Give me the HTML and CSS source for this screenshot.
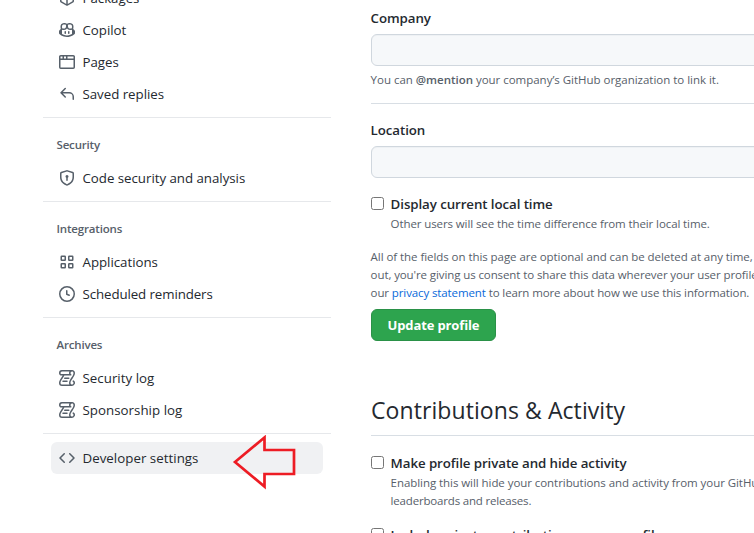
FILE: index.html
```html
<!DOCTYPE html>
<html lang="en">
<head>
<meta charset="utf-8">
<title>Public profile</title>
<link rel="stylesheet" href="styles.css">
</head>
<body>
<svg class="defs" aria-hidden="true">
<symbol id="package" viewBox="0 0 16 16"><path d="m8.878.392 5.25 3.045c.54.314.872.89.872 1.514v6.098a1.75 1.75 0 0 1-.872 1.514l-5.25 3.045a1.75 1.75 0 0 1-1.756 0l-5.25-3.045A1.75 1.75 0 0 1 1 11.049V4.951c0-.624.332-1.201.872-1.514L7.122.392a1.75 1.75 0 0 1 1.756 0ZM7.875 1.69l-4.63 2.685L8 7.133l4.755-2.758-4.63-2.685a.248.248 0 0 0-.25 0ZM2.5 5.677v5.372c0 .09.047.171.125.216l4.625 2.683V8.432Zm6.25 8.271 4.625-2.683a.25.25 0 0 0 .125-.216V5.677L8.75 8.432Z"/></symbol>
<symbol id="copilot" viewBox="0 0 16 16"><path d="M7.998 15.035c-4.562 0-7.873-2.914-7.998-3.749V9.338c.085-.628.677-1.686 1.588-2.065.013-.07.024-.143.036-.218.029-.183.06-.384.126-.612-.201-.508-.254-1.084-.254-1.656 0-.87.128-1.769.693-2.484.579-.733 1.494-1.124 2.724-1.261 1.206-.134 2.262.034 2.944.765.05.053.096.108.139.165.044-.057.094-.112.143-.165.682-.731 1.738-.899 2.944-.765 1.23.137 2.145.528 2.724 1.261.566.715.693 1.614.693 2.484 0 .572-.053 1.148-.254 1.656.066.228.098.429.126.612.012.076.024.148.037.218.924.385 1.522 1.471 1.591 2.095v1.872c0 .766-3.351 3.795-8.002 3.795Zm0-1.485c2.28 0 4.584-1.11 5.002-1.433V7.862l-.023-.116c-.49.21-1.075.291-1.727.291-1.146 0-2.059-.327-2.71-.991A3.222 3.222 0 0 1 8 6.303a3.24 3.24 0 0 1-.544.743c-.65.664-1.563.991-2.71.991-.652 0-1.236-.081-1.727-.291l-.023.116v4.255c.419.323 2.722 1.433 5.002 1.433ZM6.762 2.83c-.193-.206-.637-.413-1.682-.297-1.019.113-1.479.404-1.713.7-.247.312-.369.789-.369 1.554 0 .793.129 1.171.308 1.371.162.181.519.379 1.442.379.853 0 1.339-.235 1.638-.54.315-.322.527-.827.617-1.553.117-.935-.037-1.395-.241-1.614Zm4.155-.297c-1.044-.116-1.488.091-1.681.297-.204.219-.359.679-.242 1.614.091.726.303 1.231.618 1.553.299.305.784.54 1.638.54.922 0 1.28-.198 1.442-.379.179-.2.308-.578.308-1.371 0-.765-.123-1.242-.37-1.554-.233-.296-.693-.587-1.713-.7Z"/><path d="M6.25 9.037a.75.75 0 0 1 .75.75v1.501a.75.75 0 0 1-1.5 0V9.787a.75.75 0 0 1 .75-.75Zm4.25.75v1.501a.75.75 0 0 1-1.5 0V9.787a.75.75 0 0 1 1.5 0Z"/></symbol>
<symbol id="browser" viewBox="0 0 16 16"><path d="M0 2.75C0 1.784.784 1 1.75 1h12.5c.966 0 1.75.784 1.75 1.75v10.5A1.75 1.75 0 0 1 14.25 15H1.75A1.75 1.75 0 0 1 0 13.25ZM14.5 6h-13v7.25c0 .138.112.25.25.25h12.5a.25.25 0 0 0 .25-.25Zm-6-3.5v2h6V2.75a.25.25 0 0 0-.25-.25ZM5 2.5v2h2v-2Zm-3.25 0a.25.25 0 0 0-.25.25V4.5h2v-2Z"/></symbol>
<symbol id="reply" viewBox="0 0 16 16"><path d="M6.78 1.97a.75.75 0 0 1 0 1.06L3.81 6h6.44A4.75 4.75 0 0 1 15 10.75v2.5a.75.75 0 0 1-1.5 0v-2.5a3.25 3.25 0 0 0-3.25-3.25H3.81l2.97 2.97a.749.749 0 0 1-.326 1.275.749.749 0 0 1-.734-.215L1.47 7.28a.75.75 0 0 1 0-1.06l4.25-4.25a.75.75 0 0 1 1.06 0Z"/></symbol>
<symbol id="shield" viewBox="0 0 16 16"><path d="m8.533.133 5.25 1.68A1.75 1.75 0 0 1 15 3.48V7c0 1.566-.32 3.182-1.303 4.682-.983 1.498-2.585 2.813-5.032 3.855a1.697 1.697 0 0 1-1.33 0c-2.447-1.042-4.049-2.357-5.032-3.855C1.32 10.182 1 8.566 1 7V3.48a1.755 1.755 0 0 1 1.217-1.667l5.25-1.68a1.748 1.748 0 0 1 1.066 0Zm-.61 1.429.001.001-5.25 1.68a.251.251 0 0 0-.174.237V7c0 1.36.275 2.666 1.057 3.859.784 1.194 2.121 2.342 4.366 3.298a.196.196 0 0 0 .154 0c2.245-.957 3.582-2.103 4.366-3.297C13.225 9.666 13.5 8.358 13.5 7V3.48a.25.25 0 0 0-.174-.238l-5.25-1.68a.25.25 0 0 0-.153 0ZM9.5 6.5c0 .536-.286 1.032-.75 1.3v2.45a.75.75 0 0 1-1.5 0V7.8A1.5 1.5 0 1 1 9.5 6.5Z"/></symbol>
<symbol id="apps" viewBox="0 0 16 16"><g fill="none" stroke="currentColor" stroke-width="1.5"><rect x="2.25" y="2.25" width="4" height="4" rx=".5"/><rect x="9.75" y="2.25" width="4" height="4" rx=".5"/><rect x="2.25" y="9.75" width="4" height="4" rx=".5"/><rect x="9.75" y="9.75" width="4" height="4" rx=".5"/></g></symbol>
<symbol id="clock" viewBox="0 0 16 16"><path d="M8 0a8 8 0 1 1 0 16A8 8 0 0 1 8 0ZM1.5 8a6.5 6.5 0 1 0 13 0 6.5 6.5 0 0 0-13 0Zm7-3.25v2.992l2.028.812a.75.75 0 0 1-.557 1.392l-2.5-1A.751.751 0 0 1 7 8.25v-3.5a.75.75 0 0 1 1.5 0Z"/></symbol>
<symbol id="log" viewBox="0 0 16 16"><path d="M5 8.25a.75.75 0 0 1 .75-.75h4a.75.75 0 0 1 0 1.5h-4A.75.75 0 0 1 5 8.25ZM4 10.5A.75.75 0 0 0 4 12h4a.75.75 0 0 0 0-1.5H4Z"/><path d="M13-.005c1.654 0 3 1.328 3 3 0 .982-.338 1.933-.783 2.818-.443.879-1.028 1.758-1.582 2.588l-.011.017c-.568.853-1.104 1.659-1.501 2.446-.398.789-.623 1.494-.623 2.136a1.5 1.5 0 1 0 2.333-1.248.75.75 0 0 1 .834-1.246A3 3 0 0 1 13 16H3a3 3 0 0 1-3-3c0-1.582.891-3.135 1.777-4.506.209-.322.418-.637.623-.946.473-.709.923-1.386 1.287-2.048H2.51c-.576 0-1.381-.133-1.907-.783A2.68 2.68 0 0 1 0 2.995a3 3 0 0 1 3-3Zm0 1.5a1.5 1.5 0 0 0-1.5 1.5c0 .476.223.834.667 1.132A.75.75 0 0 1 11.75 5.5H5.368c-.467 1.003-1.141 2.015-1.773 2.963-.192.289-.381.571-.558.845C2.13 10.711 1.5 11.916 1.5 13A1.5 1.5 0 0 0 3 14.5h7.401A2.989 2.989 0 0 1 10 13c0-.979.338-1.928.784-2.812.441-.874 1.023-1.748 1.575-2.576l.017-.026c.568-.853 1.103-1.658 1.501-2.448.398-.79.623-1.497.623-2.143 0-.838-.669-1.5-1.5-1.5Zm-10 0a1.5 1.5 0 0 0-1.5 1.5c0 .321.1.569.27.778.097.12.325.227.74.227h7.674A2.737 2.737 0 0 1 10 2.995c0-.546.146-1.059.401-1.5Z"/></symbol>
<symbol id="code" viewBox="0 0 16 16"><path d="m11.28 3.22 4.25 4.25a.75.75 0 0 1 0 1.06l-4.25 4.25a.749.749 0 0 1-1.275-.326.749.749 0 0 1 .215-.734L13.94 8l-3.72-3.72a.749.749 0 0 1 .326-1.275.749.749 0 0 1 .734.215Zm-6.56 0a.751.751 0 0 1 1.042.018.751.751 0 0 1 .018 1.042L2.06 8l3.72 3.72a.749.749 0 0 1-.326 1.275.749.749 0 0 1-.734-.215L.47 8.53a.75.75 0 0 1 0-1.06Z"/></symbol>
</svg>
<div class="page">
<nav class="sidebar">
  <a class="item"><svg><use href="#package"/></svg><span>Packages</span></a>
  <a class="item"><svg><use href="#copilot"/></svg><span>Copilot</span></a>
  <a class="item"><svg><use href="#browser"/></svg><span>Pages</span></a>
  <a class="item"><svg><use href="#reply"/></svg><span>Saved replies</span></a>
  <hr>
  <h3>Security</h3>
  <a class="item"><svg><use href="#shield"/></svg><span>Code security and analysis</span></a>
  <hr>
  <h3>Integrations</h3>
  <a class="item"><svg><use href="#apps"/></svg><span>Applications</span></a>
  <a class="item"><svg><use href="#clock"/></svg><span class="t-reminders">Scheduled reminders</span></a>
  <hr>
  <h3>Archives</h3>
  <a class="item"><svg><use href="#log"/></svg><span class="t-log">Security log</span></a>
  <a class="item"><svg><use href="#log"/></svg><span class="t-log">Sponsorship log</span></a>
  <hr class="last">
  <a class="item active"><svg><use href="#code"/></svg><span class="t-log">Developer settings</span></a>
</nav>
<main class="main">
  <label class="label">Company</label>
  <div class="field"></div>
  <p class="note t-mention">You can <b>@mention</b> your company’s GitHub organization to link it.</p>
  <div class="rule"></div>
  <label class="label">Location</label>
  <div class="field"></div>
  <div class="check local">
    <i class="box"></i>
    <div><label class="label">Display current local time</label>
    <p class="note t-other">Other users will see the time difference from their local time.</p></div>
  </div>
  <p class="note terms"><span class="t-l1">All of the fields on this page are optional and can be deleted at any time,</span><br><span class="t-l2">out, you're giving us consent to share this data wherever your user profile</span><br><span class="t-l3">our <a>privacy statement</a> to learn more about how we use this information.</span></p>
  <button class="button">Update profile</button>
  <h2>Contributions &amp; Activity</h2>
  <div class="check private">
    <i class="box"></i>
    <div><label class="label">Make profile private and hide activity</label>
    <p class="note"><span class="t-enable">Enabling this will hide your contributions and activity from your GitHub</span><br><span class="t-leader">leaderboards and releases.</span></p></div>
  </div>
  <div class="check include">
    <i class="box"></i>
    <div><label class="label">Include private contributions on my profile</label></div>
  </div>
</main>
</div>
<svg class="arrow" width="66" height="56" viewBox="0 0 66 56"><path d="M3 27 32.500 2.500V15H62V39H32.500V51.500Z" fill="none" stroke="#ed1c24" stroke-width="2.700"/></svg>
</body>
</html>
```
FILE: styles.css
```css
* { box-sizing: border-box; }
html, body { height: 100%; overflow: hidden; }
body { margin: 0; background: #fff; color: #24292f; font: 13.3px/20px "Open Sans", "Noto Sans", sans-serif; }
.defs { display: none; }
.page { display: flex; height: 533px; overflow: hidden; }
.sidebar { flex: none; width: 288px; margin: -18px 40px 0 43px; }
.item { display: flex; align-items: center; gap: 7.500px; height: 32px; margin: 0 8px; padding: 0 8px; border-radius: 6px; white-space: nowrap; letter-spacing: -.03px; }
.item svg { flex: none; width: 16px; height: 16px; fill: #57606a; color: #57606a; }
.item.active { background: #f0f1f3; }
.t-reminders { letter-spacing: -.1px; }
.t-log { letter-spacing: .03px; }
.sidebar hr { height: 1px; margin: 7px 0 0; border: 0; background: #e6e8eb; }
.sidebar hr.last { margin-bottom: 8px; }
h3 { margin: 0; padding: 18px 13.500px 8px; height: 44px; font-size: 11.5px; line-height: 18px; font-weight: 600; letter-spacing: -.17px; color: #57606a; }
.main { flex: none; width: 560px; padding-top: 8px; white-space: nowrap; }
.label { display: block; height: 20px; font-weight: 600; letter-spacing: -.08px; margin-left: -.4px; }
.field { height: 32px; margin-top: 6px; border: 1px solid #d0d7de; border-radius: 6px; background: #f6f8fa; box-shadow: inset 0 1px 0 rgba(208,215,222,.2); }
.note { margin: 0 0 0 -.4px; font-size: 11.5px; line-height: 18px; color: #57606a; }
.t-mention { margin-top: 5px; letter-spacing: -.02px; }
.t-other { letter-spacing: -.1px; }
.t-l1 { letter-spacing: -.06px; }
.t-l2 { letter-spacing: -.1px; }
.t-l3 { letter-spacing: -.11px; }
.t-enable { letter-spacing: -.06px; }
.t-leader { letter-spacing: -.18px; }
.note b { font-weight: 600; }
.note a { color: #0969da; }
.rule { height: 1px; margin: 14px 0 16px; background: #d8dee4; }
.check { display: flex; gap: 7px; }
.check .note { margin-top: 1px; }
.box { flex: none; width: 13px; height: 13px; margin-top: 3px; border: 1px solid #767676; border-radius: 2.500px; background: #fff; }
.local { margin-top: 16px; }
.terms { margin-top: 15px; }
.button { display: block; width: 125px; height: 32px; margin-top: 7px; padding: 0; border: 1px solid #2a9147; border-radius: 6px; background: #2da44e; color: #fff; font: 700 13px/20px "Open Sans", sans-serif; letter-spacing: -.13px; }
h2 { margin: 54px 0 0; height: 41px; border-bottom: 1px solid #d8dee4; font-size: 23px; line-height: 31px; font-weight: 400; letter-spacing: .08px; }
.private { margin-top: 17px; }
.include { margin-top: 15px; }
.arrow { position: absolute; left: 232px; top: 435px; }
```
